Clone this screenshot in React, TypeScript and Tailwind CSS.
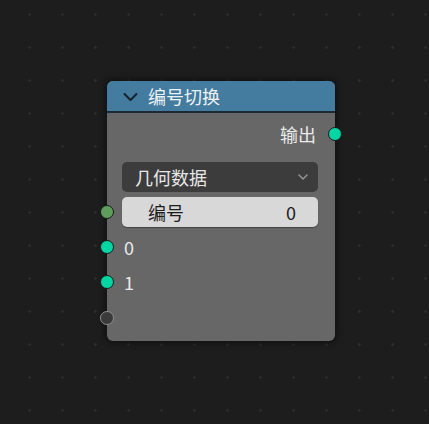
import React from "react";

const font = { fontFamily: '"Noto Sans CJK SC", "Noto Sans", sans-serif' };

const Socket = ({ className }: { className: string }) => (
  <span className={`absolute top-1/2 -translate-y-1/2 w-[14px] h-[14px] rounded-full ${className}`} />
);

const App: React.FC = () => {
  return (
    <div
      className="w-[429px] h-[424px] bg-[#1d1d1d] pt-[81px] pl-[107px] bg-[radial-gradient(circle,#2c2c2c_1px,transparent_1.5px)] bg-[length:33px_33px] bg-[position:13px_-2px]"
      style={font}
    >
      <div className="relative w-[228px] h-[260px] rounded-[6px] bg-[#676767] shadow-[0_0_6px_2px_rgba(0,0,0,0.45)]">
        <div className="h-[32px] rounded-t-[6px] bg-[#437c9f] border-b-2 border-[#1c2a34] flex items-center pl-[16px] gap-[10px]">
          <svg width="15" height="10" viewBox="0 0 15 10" className="mt-[1px]">
            <path d="M1.5 2 L7.5 8 L13.5 2" fill="none" stroke="#16232d" strokeWidth="2" strokeLinecap="round" strokeLinejoin="round" />
          </svg>
          <span className="text-[18px] leading-none text-[#eef2f5]">编号切换</span>
        </div>

        <div className="relative mt-[10px] h-[22px] flex items-center justify-end pr-[19px]">
          <span className="text-[18px] leading-none text-[#eaeaea]">输出</span>
          <Socket className="-right-[7px] bg-[#00d6a3] border border-[#1a1a1a]" />
        </div>

        <div className="mt-[17px] ml-[15px] mr-[17px] h-[30px] rounded-[5px] bg-[#3c3c3c] flex items-center justify-between pl-[13px] pr-[10px]">
          <span className="text-[18px] leading-none text-[#e6e6e6]">几何数据</span>
          <svg width="10" height="6" viewBox="0 0 10 6">
            <path d="M1 1 L5 5 L9 1" fill="none" stroke="#9a9a9a" strokeWidth="1.4" strokeLinecap="round" strokeLinejoin="round" />
          </svg>
        </div>

        <div className="relative mt-[5px] h-[30px]">
          <Socket className="-left-[7px] bg-[#5f9d5c] border border-[#1a1a1a]" />
          <div className="ml-[15px] mr-[17px] h-full rounded-[5px] bg-[#d8d8d8] flex items-center justify-between pl-[26px] pr-[22px] shadow-[0_1px_1px_rgba(0,0,0,0.35)]">
            <span className="text-[18px] leading-none text-[#1c1c1c]">编号</span>
            <span className="text-[18px] leading-none text-[#1c1c1c]">0</span>
          </div>
        </div>

        <div className="relative mt-[9px] h-[22px] flex items-center pl-[17px]">
          <Socket className="-left-[7px] bg-[#00d6a3] border border-[#1a1a1a]" />
          <span className="text-[18px] leading-none text-[#eaeaea]">0</span>
        </div>

        <div className="relative mt-[13px] h-[22px] flex items-center pl-[17px]">
          <Socket className="-left-[7px] bg-[#00d6a3] border border-[#1a1a1a]" />
          <span className="text-[18px] leading-none text-[#eaeaea]">1</span>
        </div>

        <div className="relative mt-[14px] h-[22px]">
          <Socket className="-left-[7px] bg-[#3a3a3a] border-[1.5px] border-[#8f8f8f]" />
        </div>
      </div>
    </div>
  );
};

export default App;
